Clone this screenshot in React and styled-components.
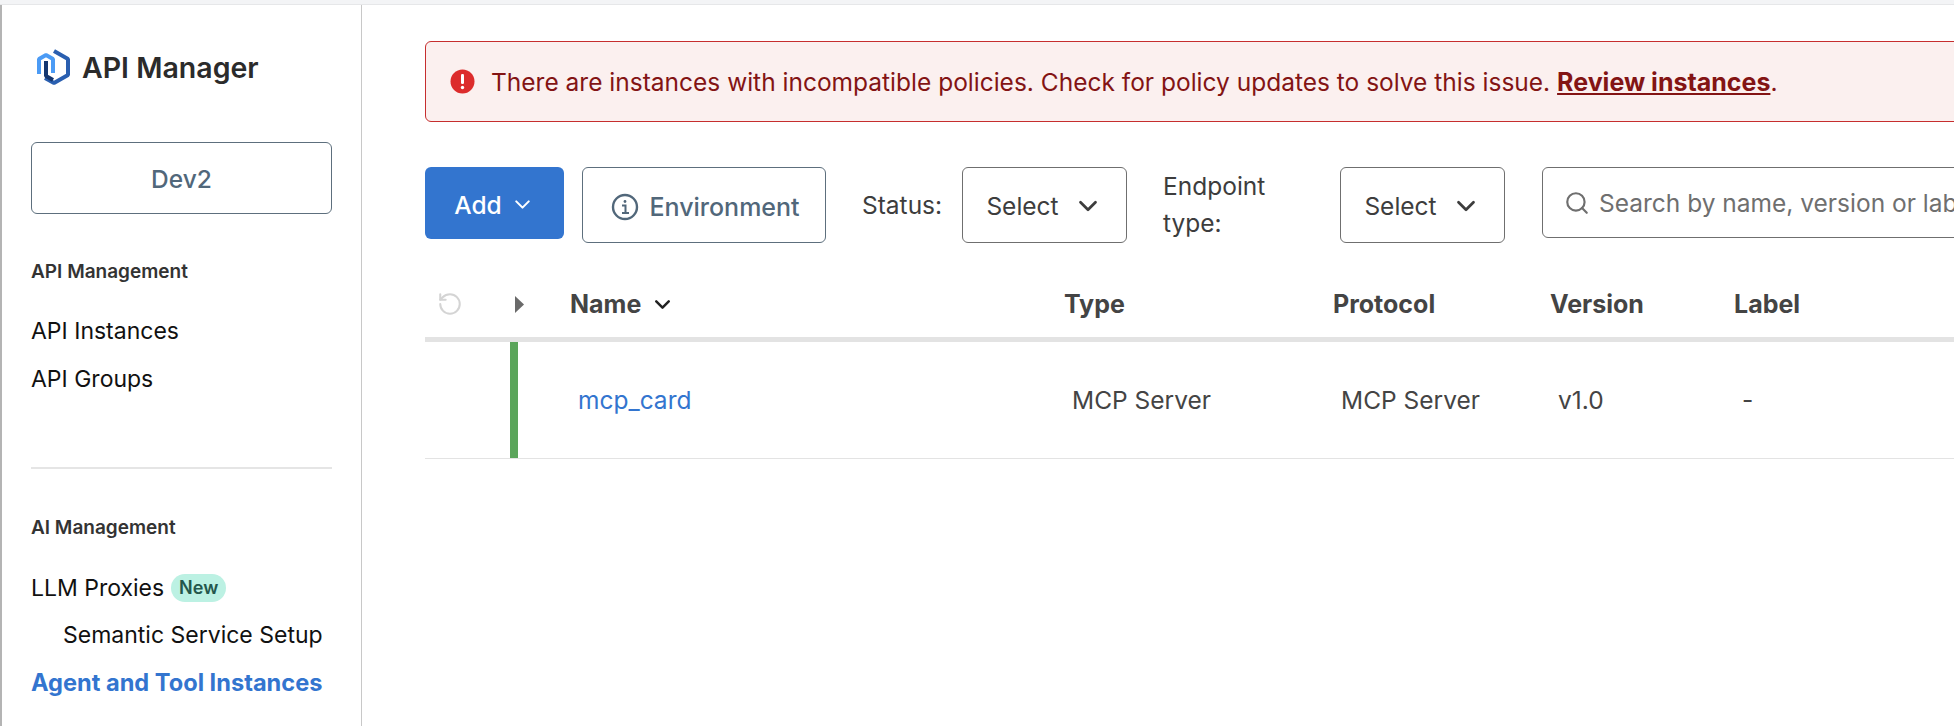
import React from 'react';
import styled, { createGlobalStyle } from 'styled-components';
import { ChevronDown, Search, RotateCcw } from 'lucide-react';

const GlobalStyle = createGlobalStyle`
  html, body {
    margin: 0;
    height: 100%;
    overflow: hidden;
    background: #fff;
    font-family: Inter, "Liberation Sans", sans-serif;
  }
  * { box-sizing: border-box; }
`;

const Page = styled.div`
  width: 1954px;
  height: 726px;
  display: flex;
  flex-direction: column;
  overflow: hidden;
`;

const TopStrip = styled.div`
  height: 5px;
  flex: none;
  background: #f3f4f6;
  border-bottom: 1px solid #e6e7e9;
`;

const Shell = styled.div`
  flex: 1;
  display: flex;
  min-height: 0;
`;

const Sidebar = styled.aside`
  width: 362px;
  flex: none;
  padding: 44px 29px 0 29px;
  border-left: 2px solid #b4b4b4;
  border-right: 1px solid #c8c8c8;
`;

const Brand = styled.div`
  display: flex;
  align-items: center;
  height: 36px;
  margin-left: 5px;
  gap: 12px;
`;

const BrandName = styled.span`
  font-size: 28.5px;
  font-weight: 600;
  color: #2b2b2b;
`;

const EnvButton = styled.div`
  height: 72px;
  margin-top: 57px;
  padding-top: 2px;
  display: flex;
  align-items: center;
  justify-content: center;
  border: 1px solid #5d6f7d;
  border-radius: 6px;
  font-size: 24.5px;
  font-weight: 500;
  color: #51677a;
`;

const SectionTitle = styled.div`
  font-size: 19px;
  font-weight: 600;
  color: #333;
  line-height: 22px;
  margin-top: ${p => p.$top}px;
`;

const NavItem = styled.div`
  font-size: ${p => (p.$active ? 23.6 : 23)}px;
  line-height: 28px;
  height: 28px;
  display: flex;
  align-items: center;
  white-space: nowrap;
  color: ${p => (p.$active ? '#3375cf' : '#111')};
  font-weight: ${p => (p.$active ? 700 : 400)};
  margin-top: ${p => p.$top}px;
  padding-left: ${p => (p.$nested ? 32 : 0)}px;
`;

const NewBadge = styled.span`
  margin-left: 7px;
  width: 55px;
  height: 28px;
  border-radius: 14px;
  background: #bcf1e3;
  color: #24574c;
  font-size: 18px;
  font-weight: 600;
  display: flex;
  align-items: center;
  justify-content: center;
`;

const Divider = styled.hr`
  border: 0;
  height: 2px;
  background: #e5e5e5;
  margin: 74px 0 0 0;
`;

const Main = styled.main`
  flex: 1;
  min-width: 0;
  padding: 36px 0 0 63px;
`;

const Alert = styled.div`
  width: 1560px;
  height: 81px;
  display: flex;
  align-items: center;
  gap: 16px;
  padding-left: 24px;
  background: #fbf0ef;
  border: 1px solid #c62e2e;
  border-radius: 6px;
  color: #831414;
  font-size: 24.5px;
`;

const AlertLink = styled.a`
  font-size: 25px;
  font-weight: 700;
  text-decoration: underline;
`;

const Toolbar = styled.div`
  margin-top: 45px;
  display: flex;
  align-items: flex-start;
`;

const PrimaryButton = styled.div`
  width: 139px;
  height: 72px;
  flex: none;
  padding-top: 3px;
  background: #3375cf;
  border-radius: 6px;
  color: #fff;
  font-size: 24.5px;
  font-weight: 500;
  display: flex;
  align-items: center;
  justify-content: center;
  gap: 8px;
`;

const OutlineButton = styled.div`
  width: 244px;
  height: 76px;
  flex: none;
  margin-left: 18px;
  padding: 3px 0 0 3px;
  border: 1px solid #5d6f7d;
  border-radius: 6px;
  color: #51677a;
  font-size: 25px;
  font-weight: 500;
  display: flex;
  align-items: center;
  justify-content: center;
  gap: 10px;
`;

const FilterLabel = styled.label`
  flex: none;
  font-size: 24.5px;
  line-height: 37px;
  color: #3d3d3d;
  margin-left: ${p => p.$left}px;
  width: ${p => p.$width}px;
  height: 76px;
  display: flex;
  align-items: center;
`;

const SelectBox = styled.div`
  width: 165px;
  height: 76px;
  flex: none;
  padding-top: 2px;
  border: 1px solid #6f6f6f;
  border-radius: 6px;
  display: flex;
  align-items: center;
  justify-content: center;
  gap: 14px;
  font-size: 24.5px;
  color: #3d3d3d;
`;

const SearchBox = styled.div`
  width: 460px;
  height: 71px;
  flex: none;
  margin-left: 37px;
  padding-left: 21px;
  border: 1px solid #6f6f6f;
  border-radius: 6px;
  display: flex;
  align-items: center;
  gap: 9px;
  font-size: 24.5px;
  color: #6f6f6f;
  white-space: nowrap;
  overflow: hidden;
`;

const HeaderRow = styled.div`
  margin-top: 28px;
  height: 71px;
  display: grid;
  grid-template-columns: 85px 60px 494px 269px 217px 184px 1fr;
  align-items: center;
  border-bottom: 5px solid #e3e3e3;
  font-size: 25px;
  font-weight: 700;
  color: #444;
`;

const IconCell = styled.div`
  display: flex;
  padding-left: ${p => p.$left}px;
`;

const NameHead = styled.div`
  display: flex;
  align-items: center;
  gap: 9px;
`;

const BodyRow = styled.div`
  height: 117px;
  display: grid;
  grid-template-columns: 85px 60px 494px 269px 217px 184px 1fr;
  align-items: center;
  border-bottom: 1px solid #e3e3e3;
  font-size: 24.5px;
  color: #444;
`;

const StatusBar = styled.div`
  width: 8px;
  height: 116px;
  background: #5ba55b;
`;

const BodyCell = styled.div`
  padding-left: 8px;
`;

const NameLink = styled.a`
  color: #3375cf;
`;

function Logo() {
  return (
    <svg width="34" height="36" viewBox="0 0 34 36" fill="none">
      <path d="M18 2 L32 10 V26 L18 34 L9 29" stroke="#2a5fb0" strokeWidth="4" strokeLinejoin="bevel" />
      <path d="M3 25 V10 L10 6 L17 10 V24" stroke="#4b9bf5" strokeWidth="4" strokeLinejoin="bevel" />
      <path d="M10 12 V27 L17 31" stroke="#14366f" strokeWidth="4" strokeLinejoin="bevel" />
    </svg>
  );
}

function AlertIcon() {
  return (
    <svg width="25" height="25" viewBox="0 0 25 25">
      <circle cx="12.5" cy="12.5" r="12" fill="#dc2c2c" />
      <rect x="11" y="5" width="3" height="10" rx="1.2" fill="#fff" />
      <circle cx="12.5" cy="18.5" r="1.7" fill="#fff" />
    </svg>
  );
}

function InfoIcon() {
  return (
    <svg width="28" height="28" viewBox="0 0 28 28" fill="none" stroke="#51677a">
      <circle cx="14" cy="14" r="12" strokeWidth="2.4" />
      <path d="M11 12.5 H14.5 V20 M11 20 H18" strokeWidth="2" />
      <circle cx="14" cy="8.5" r="1.4" fill="#51677a" stroke="none" />
    </svg>
  );
}

function ExpandCaret() {
  return (
    <svg width="9" height="17" viewBox="0 0 9 17">
      <path d="M0 0 L9 8.5 L0 17 Z" fill="#6a6a6a" />
    </svg>
  );
}

export default function App() {
  return (
    <Page>
      <GlobalStyle />
      <TopStrip />
      <Shell>
        <Sidebar>
          <Brand>
            <Logo />
            <BrandName>API Manager</BrandName>
          </Brand>
          <EnvButton>Dev2</EnvButton>
          <SectionTitle $top={47}>API Management</SectionTitle>
          <NavItem $top={34}>API Instances</NavItem>
          <NavItem $top={20}>API Groups</NavItem>
          <Divider />
          <SectionTitle $top={48}>AI Management</SectionTitle>
          <NavItem $top={35}>
            LLM Proxies
            <NewBadge>New</NewBadge>
          </NavItem>
          <NavItem $top={19} $nested>Semantic Service Setup</NavItem>
          <NavItem $top={20} $active>Agent and Tool Instances</NavItem>
        </Sidebar>
        <Main>
          <Alert>
            <AlertIcon />
            <span>
              There are instances with incompatible policies. Check for policy updates to solve this issue.{' '}
              <AlertLink>Review instances</AlertLink>.
            </span>
          </Alert>
          <Toolbar>
            <PrimaryButton>
              Add
              <ChevronDown size={25} strokeWidth={2} />
            </PrimaryButton>
            <OutlineButton>
              <InfoIcon />
              Environment
            </OutlineButton>
            <FilterLabel $left={36} $width={100}>Status:</FilterLabel>
            <SelectBox>
              Select
              <ChevronDown size={30} strokeWidth={2.2} />
            </SelectBox>
            <FilterLabel $left={36} $width={177}>Endpoint<br />type:</FilterLabel>
            <SelectBox>
              Select
              <ChevronDown size={30} strokeWidth={2.2} />
            </SelectBox>
            <SearchBox>
              <Search size={26} color="#6f6f6f" />
              Search by name, version or label
            </SearchBox>
          </Toolbar>
          <HeaderRow>
            <IconCell $left={12}>
              <RotateCcw size={26} strokeWidth={1.9} color="#d4d4d4" />
            </IconCell>
            <IconCell $left={5}>
              <ExpandCaret />
            </IconCell>
            <NameHead>
              Name
              <ChevronDown size={25} strokeWidth={2.4} color="#222" />
            </NameHead>
            <div>Type</div>
            <div>Protocol</div>
            <div>Version</div>
            <div>Label</div>
          </HeaderRow>
          <BodyRow>
            <div />
            <StatusBar />
            <BodyCell><NameLink>mcp_card</NameLink></BodyCell>
            <BodyCell>MCP Server</BodyCell>
            <BodyCell>MCP Server</BodyCell>
            <BodyCell>v1.0</BodyCell>
            <BodyCell>-</BodyCell>
          </BodyRow>
        </Main>
      </Shell>
    </Page>
  );
}
